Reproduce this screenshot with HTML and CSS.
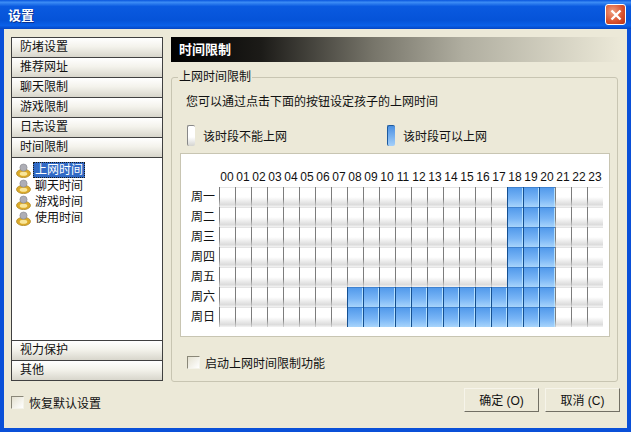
FILE: index.html
```html
<!DOCTYPE html>
<html lang="zh-CN">
<head>
  <meta charset="UTF-8">
  <title>设置</title>
  <link rel="stylesheet" href="styles.css">
</head>
<body>
  <svg class="defs" width="0" height="0">
    <symbol id="user" viewBox="0 0 15 15">
      <ellipse cx="7.5" cy="10.4" rx="7" ry="4.2" fill="#dcaa28" stroke="#b08a2a" stroke-width="0.8"/>
      <ellipse cx="7.5" cy="10.8" rx="3.8" ry="2" fill="#f9e69a"/>
      <circle cx="7.5" cy="4.6" r="3.6" fill="#aeaeb6" stroke="#85858d" stroke-width="0.6"/>
    </symbol>
  </svg>

  <div class="window">
    <div class="titlebar">
      <span class="title">设置</span>
      <div class="close">
        <svg width="14" height="14" viewBox="0 0 14 14"><path d="M2.5 2.5l9 9M11.5 2.5l-9 9" stroke="#fff" stroke-width="2.4"/></svg>
      </div>
    </div>

    <div class="client">
      <div class="main">
        <div class="side">
          <div class="side-item">防堵设置</div>
          <div class="side-item">推荐网址</div>
          <div class="side-item">聊天限制</div>
          <div class="side-item">游戏限制</div>
          <div class="side-item">日志设置</div>
          <div class="side-item">时间限制</div>
          <ul class="tree">
            <li><svg class="tree-icon"><use href="#user"/></svg><span class="tree-label selected">上网时间</span></li>
            <li><svg class="tree-icon"><use href="#user"/></svg><span class="tree-label">聊天时间</span></li>
            <li><svg class="tree-icon"><use href="#user"/></svg><span class="tree-label">游戏时间</span></li>
            <li><svg class="tree-icon"><use href="#user"/></svg><span class="tree-label">使用时间</span></li>
          </ul>
          <div class="side-item">视力保护</div>
          <div class="side-item">其他</div>
        </div>

        <div class="content">
          <div class="banner">时间限制</div>
          <fieldset class="group">
            <legend>上网时间限制</legend>
            <p class="hint">您可以通过点击下面的按钮设定孩子的上网时间</p>
            <div class="legend-row">
              <div class="legend-item"><span class="swatch off"></span>该时段不能上网</div>
              <div class="legend-item"><span class="swatch on"></span>该时段可以上网</div>
            </div>
            <div class="panel">
              <div class="schedule" id="schedule"></div>
            </div>
            <label class="check enable"><span class="box"></span>启动上网时间限制功能</label>
          </fieldset>
        </div>
      </div>

      <div class="footer">
        <label class="check"><span class="box"></span>恢复默认设置</label>
        <div class="buttons">
          <button>确定 (O)</button>
          <button>取消 (C)</button>
        </div>
      </div>
    </div>
  </div>

  <script src="script.js"></script>
</body>
</html>
```

FILE: styles.css
```css
* {
  box-sizing: border-box;
}

body {
  margin: 0;
  width: 631px;
  height: 432px;
  overflow: hidden;
  font-family: "Liberation Sans", "Noto Sans CJK SC", sans-serif;
  font-size: 12px;
  color: #111;
}

.defs {
  display: block;
}

.window {
  width: 631px;
  height: 432px;
  display: flex;
  flex-direction: column;
  background: #0a50d8;
  border-radius: 6px 6px 0 0;
}

.titlebar {
  height: 29px;
  flex: none;
  display: flex;
  align-items: center;
  justify-content: space-between;
  padding: 0 5px 0 8px;
  background: linear-gradient(#0855dd 0, #3c8cf5 8%, #0a5ae0 22%, #0553d8 70%, #0a60e8 88%, #0546c4 100%);
}

.title {
  color: #fff;
  font-weight: bold;
  font-size: 13px;
  text-shadow: 1px 1px 0 #0a2f90;
}

.close {
  width: 21px;
  height: 21px;
  display: flex;
  align-items: center;
  justify-content: center;
  border: 1px solid #fff;
  border-radius: 3px;
  background: radial-gradient(circle at 35% 35%, #f0a080, #d8502c 60%, #b83214);
}

.client {
  flex: 1;
  margin: 0 4px 4px;
  padding: 8px 10px 0 7px;
  background: #ece9d8;
  display: flex;
  flex-direction: column;
}

.main {
  display: flex;
  gap: 8px;
  height: 344px;
}

.side {
  width: 152px;
  flex: none;
  display: flex;
  flex-direction: column;
  border: 1px solid #404040;
  border-top: 0;
  background: #fff;
}

.side-item {
  height: 20px;
  flex: none;
  padding-left: 8px;
  line-height: 18px;
  border-top: 1px solid #404040;
  background: linear-gradient(#fff, #f4f3ec 45%, #d8d6cc);
}

.tree {
  flex: 1;
  margin: 0;
  padding: 4px 0 0 4px;
  list-style: none;
  border-top: 1px solid #404040;
}

.tree li {
  height: 16px;
  display: flex;
  align-items: center;
}

.tree-icon {
  width: 15px;
  height: 15px;
  margin-right: 2px;
}

.tree-label {
  padding: 0 2px;
  line-height: 16px;
}

.tree-label.selected {
  background: #316ac5;
  color: #fff;
  outline: 1px dotted #1a1a1a;
  outline-offset: -1px;
}

.content {
  width: 450px;
  flex: none;
}

.banner {
  height: 25px;
  padding-left: 8px;
  line-height: 25px;
  font-weight: bold;
  font-size: 13px;
  color: #fff;
  background: linear-gradient(90deg, #000 0, #1c1b18 20%, #77756a 45%, #b0aea0 65%, #ece9d8 100%);
}

.group {
  margin: 8px 3px 0 0;
  padding: 0;
  height: 312px;
  border: 1px solid #c8c5b2;
  border-radius: 3px;
  display: block;
}

.group legend {
  margin-left: 6px;
  padding: 0 1px;
  height: 14px;
  line-height: 14px;
}

.hint {
  margin: 11px 0 0 14px;
  line-height: 14px;
}

.legend-row {
  display: flex;
  margin: 16px 0 0 15px;
}

.legend-item {
  width: 200px;
  display: flex;
  align-items: center;
  height: 21px;
}

.swatch {
  width: 8px;
  height: 21px;
  margin-right: 8px;
  border-radius: 2px;
  border-left: 1px solid #888;
  border-top: 1px solid #888;
}

.swatch.off {
  background: linear-gradient(#fff 55%, #d4d4d0);
}

.swatch.on {
  border-color: #1d5a9e;
  background: linear-gradient(#4a90e2, #a4d0fa);
}

.panel {
  margin: 7px 0 0 8px;
  width: 430px;
  height: 184px;
  padding: 15px 0 0 6px;
  background: #fff;
  border: 1px solid #c8c5b2;
}

.schedule {
  display: grid;
  grid-template-columns: 32px repeat(24, 16px);
  grid-template-rows: 18px;
  grid-auto-rows: 20px;
  line-height: 20px;
}

.hour {
  text-align: center;
  line-height: 16px;
  font-family: "Liberation Sans", sans-serif;
}

.day {
  text-align: center;
}

.cell {
  background:
    linear-gradient(#7c7c7c 60%, #d0d0d0) 0 0 / 1px 100% no-repeat,
    linear-gradient(#e4e4e4, #e4e4e4) 0 0 / 100% 1px no-repeat,
    linear-gradient(#fff 50%, #e8e8e8 75%, #dcdcdc 88%, #f4f4f4 100%);
}

.cell.allowed {
  background:
    linear-gradient(#154f90, #154f90) 0 0 / 1px 100% no-repeat,
    linear-gradient(#3f82d0, #3f82d0) 0 0 / 100% 1px no-repeat,
    linear-gradient(#b4e0ff, #b4e0ff) 100% 0 / 1px 100% no-repeat,
    linear-gradient(#4f98ea, #7ab6f6 60%, #a8d4fb);
}

.check {
  display: flex;
  align-items: center;
  gap: 5px;
}

.check.enable {
  margin: 17px 0 0 15px;
}

.box {
  width: 13px;
  height: 13px;
  background: linear-gradient(135deg, #e4e1d0, #fff);
  border: 1px solid;
  border-color: #8a8778 #f4f3ea #f4f3ea #8a8778;
}

.footer {
  flex: 1;
  display: flex;
  align-items: center;
  justify-content: space-between;
  padding-bottom: 4px;
}

.buttons {
  display: flex;
  gap: 6px;
  margin: 0 -3px 6px 0;
}

.buttons button {
  width: 75px;
  height: 24px;
  padding: 0;
  font: inherit;
  color: #111;
  background: #ece9d8;
  border: 1px solid;
  border-color: #f6f4ea #716f64 #716f64 #f6f4ea;
}
```

FILE: script.js
```js
// 7 rows of 24 one hour cells, weekdays 18-20 and weekends 08-20 are allowed
var days = ['周一', '周二', '周三', '周四', '周五', '周六', '周日'];
var schedule = document.getElementById('schedule');

function add(className, text) {
  var el = document.createElement('div');
  el.className = className;
  if (text) el.textContent = text;
  schedule.appendChild(el);
}

add('corner');
for (var h = 0; h < 24; h++) {
  add('hour', String(h).padStart(2, '0'));
}

days.forEach(function (day, d) {
  add('day', day);
  var from = d < 5 ? 18 : 8;
  for (var h = 0; h < 24; h++) {
    add(h >= from && h <= 20 ? 'cell allowed' : 'cell');
  }
});
```
